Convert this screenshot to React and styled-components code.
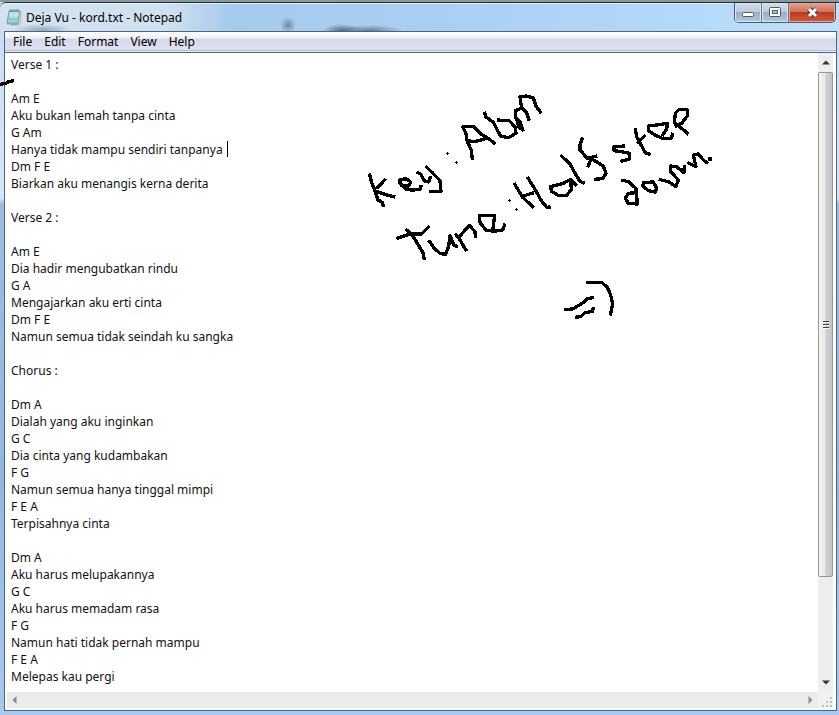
import React, { useState } from 'react'
import styled, { createGlobalStyle } from 'styled-components'

const menus = ['File', 'Edit', 'Format', 'View', 'Help']

const lyrics = `Verse 1 :

Am E
Aku bukan lemah tanpa cinta
G Am
Hanya tidak mampu sendiri tanpanya
Dm F E
Biarkan aku menangis kerna derita

Verse 2 :

Am E
Dia hadir mengubatkan rindu
G A
Mengajarkan aku erti cinta
Dm F E
Namun semua tidak seindah ku sangka

Chorus :

Dm A
Dialah yang aku inginkan
G C
Dia cinta yang kudambakan
F G
Namun semua hanya tinggal mimpi
F E A
Terpisahnya cinta

Dm A
Aku harus melupakannya
G C
Aku harus memadam rasa
F G
Namun hati tidak pernah mampu
F E A
Melepas kau pergi`

// pen strokes, three units to a pixel
const keyStrokes = [
  'M28 250L34 275L44 300L54 330L68 338L70 352',
  'M77 266L50 296M44 302L80 315L106 321',
  'M120 286L146 288L152 276L140 267L120 268L120 280L140 299L160 300L182 297L183 284',
  'M170 246L182 252L192 272L206 276L212 258',
  'M196 228L215 246L240 272L243 304L208 304',
  'M337 209L334 180L322 155L318 130L308 110L340 110L362 132L385 145L406 162',
  'M318 152L345 155L380 145',
  'M373 65L377 80L400 97L412 120L422 138L445 143L468 130L466 112L448 92L410 90',
  'M490 124L480 95L468 86L466 62L485 54L500 68L508 92M470 84L476 112L490 120',
  'M485 56L480 20L500 18L520 24L528 48L544 70',
  'M109 446L150 432L185 432L209 408',
  'M136 417L155 432L172 460L190 490L193 510',
  'M206 451L222 474L240 490L256 494L266 470L270 436L282 466L294 470',
  'M285 430L300 450L320 484M298 440L328 406L345 425L347 445',
  'M398 422L404 376L358 376L360 398L378 420L400 424L428 420L435 401',
]

const tuneStrokes = [
  'M42 279L68 322L102 354M82 261L104 296L124 332L140 352L148 352L146 346',
  'M70 318L102 308',
  'M212 268L190 280L152 290L154 304L175 316L200 316L214 298L212 268L230 287',
  'M182 196L210 222L228 255L240 274L254 280',
  'M248 142L240 165L240 180L262 205L292 198',
  'M263 232L274 206L310 228L318 250L308 266L283 268',
  'M375 168L342 170L342 182L370 186L388 190L388 208L361 214',
  'M405 115L410 140L425 168L436 188L452 194M412 160L437 135',
  'M445 108L470 105L502 100L500 118L486 138M445 106L446 122L466 136L490 146L514 145L519 128',
  'M566 133L545 115L523 98L526 70L538 58L563 60L562 78L545 100L524 110',
  'M364 270L385 275L408 295L412 342L385 340L376 325L385 310L408 308',
  'M428 292L430 278L460 276L470 294L466 306L445 302L428 288',
  'M476 268L505 275L528 290L535 270L512 245L512 228L530 230L552 248L553 226',
  'M562 217L588 230L580 195L595 192L610 210L624 220',
  'M625 207L636 207',
]

const smileStrokes = [
  'M108 37L155 37L172 52L182 75L188 100L181 137',
  'M42 119L68 117L100 98L112 86L132 82',
  'M76 142L92 140L105 128L128 124L130 110',
]

const Strokes = ({ x, y, paths }) => (
  <g transform={`translate(${x} ${y}) scale(0.3333)`}>
    {paths.map((d) => (
      <path key={d} d={d} />
    ))}
  </g>
)

const NotepadIcon = () => (
  <svg width='16' height='17' viewBox='0 0 16 17' aria-hidden='true'>
    <path d='M13 2l2 1-1 13H5l7-1z' fill='#efe9d3' stroke='#9a9c8c' strokeWidth='.6' />
    <path d='M3 2h11l-2 13H1z' fill='#86c3c6' stroke='#6f979d' strokeWidth='.8' />
    <path d='M4 3h9l-1 5H3z' fill='#b5e3e2' />
    <path d='M3 6h10M3 9h9M2 12h10' stroke='#c9eeec' strokeWidth='.8' />
    <path d='M4 0v3M6 0v3M8 0v3M10 0v3M12 0v3' stroke='#5c757b' strokeWidth='.8' />
  </svg>
)

const App = () => {
  const [text, setText] = useState(lyrics)

  return (
    <>
      <GlobalStyle />
      <Window>
        <TitleBar>
          <NotepadIcon />
          <Title>Deja Vu - kord.txt - Notepad</Title>
          <Controls>
            <ControlButton aria-label='Minimize'>
              <svg width='13' height='12' viewBox='0 0 13 12'>
                <rect x='.5' y='5.5' width='11' height='4' rx='1' fill='#fff' stroke='#4c5a6b' />
              </svg>
            </ControlButton>
            <ControlButton aria-label='Maximize'>
              <svg width='13' height='12' viewBox='0 0 13 12'>
                <rect x='.5' y='.5' width='11' height='9' rx='1' fill='#fff' stroke='#4c5a6b' />
                <rect x='3.500' y='3.500' width='5' height='3' fill='#b9c4d2' stroke='#4c5a6b' />
              </svg>
            </ControlButton>
            <ControlButton $close aria-label='Close'>
              <svg width='13' height='12' viewBox='0 0 13 12'>
                <path d='M3 2l7 7M10 2l-7 7' stroke='#5b3a40' strokeWidth='5' />
                <path d='M3 2l7 7M10 2l-7 7' stroke='#fff' strokeWidth='3' />
              </svg>
            </ControlButton>
          </Controls>
        </TitleBar>

        <Client>
          <MenuBar>
            {menus.map((menu) => (
              <MenuButton key={menu}>{menu}</MenuButton>
            ))}
          </MenuBar>
          <Editor>
            <TextArea
              aria-label='Document text'
              spellCheck={false}
              rows={37}
              wrap='off'
              value={text}
              onChange={(e) => setText(e.target.value)}
            />
            <VerticalBar>
              <ArrowButton aria-label='Scroll up'>
                <svg width='8' height='5' viewBox='0 0 8 5'>
                  <path d='M0 4.500L4 0.500L8 4.500z' fill='#333' />
                </svg>
              </ArrowButton>
              <Thumb>
                <svg width='8' height='10' viewBox='0 0 8 10'>
                  <path d='M1 1.500h6M1 4.500h6M1 7.500h6' stroke='#444' />
                  <path d='M1 2.500h6M1 5.500h6M1 8.500h6' stroke='#fff' />
                </svg>
              </Thumb>
              <ArrowButton aria-label='Scroll down'>
                <svg width='8' height='5' viewBox='0 0 8 5'>
                  <path d='M0 0.500L4 4.500L8 0.500z' fill='#333' />
                </svg>
              </ArrowButton>
            </VerticalBar>
          </Editor>
          <HorizontalBar>
            <ArrowButton aria-label='Scroll left'>
              <svg width='5' height='8' viewBox='0 0 5 8'>
                <path d='M4.500 0L0.500 4L4.500 8z' fill='#8a8a8a' />
              </svg>
            </ArrowButton>
            <Track />
            <ArrowButton aria-label='Scroll right'>
              <svg width='5' height='8' viewBox='0 0 5 8'>
                <path d='M0.500 0L4.500 4L0.500 8z' fill='#8a8a8a' />
              </svg>
            </ArrowButton>
            <Grip>
              <svg width='11' height='11' viewBox='0 0 11 11'>
                <path
                  d='M8 0h2v2h-2zM8 4h2v2h-2zM8 8h2v2h-2zM4 4h2v2h-2zM4 8h2v2h-2zM0 8h2v2h-2z'
                  fill='#bcbcbc'
                />
              </svg>
            </Grip>
          </HorizontalBar>
        </Client>

        <Ink width='839' height='715' viewBox='0 0 839 715' aria-label='Key : Abm, Tune : Half step down'>
          <Strokes x={360} y={90} paths={keyStrokes} />
          <Strokes x={500} y={90} paths={tuneStrokes} />
          <Strokes x={550} y={270} paths={smileStrokes} />
          <Strokes x={0} y={0} paths={['M0 253L18 250L25 245L42 242']} />
          <path
            className='dot'
            d='M446 153.500h3M447.500 152v3M455 162.500h3M456.500 161v3M508 200.500h3M509.500 199v3M515 209.500h3M516.500 208v3'
          />
          <path className='dot' d='M227.500 141v16' />
        </Ink>
      </Window>
    </>
  )
}

const GlobalStyle = createGlobalStyle`
  *{
    box-sizing:border-box;
  }
  body{
    margin:0;
    font-family:"Noto Sans", "Open Sans", sans-serif;
    font-size:12px;
    color:#000;
  }
  button{
    font:inherit;
    color:inherit;
    border:none;
    background:none;
    padding:0;
    display:flex;
    align-items:center;
    justify-content:center;
  }
`

const Window = styled.main`
  position:relative;
  min-height:100vh;
  display:flex;
  flex-direction:column;
  overflow:hidden;
  padding:0 2px 4px 4px;
  border-top:2px solid #8a9897;
  background:linear-gradient(#c8def3 0, #d6e6f6 196px, #9bbde2 202px, #93b8e0 480px, #a9c9ee 100%);
`

const TitleBar = styled.header`
  display:flex;
  align-items:center;
  height:29px;
  margin:0 -2px 0 -4px;
  padding:0 3px 0 6px;
  border-top:1px solid #1d2c3a;
  border-top-left-radius:6px;
  box-shadow:inset 0 1px #e6f4ff;
  background:
    radial-gradient(circle 8px at 288px 22px, #6c8cae 0, transparent 100%),
    radial-gradient(ellipse 20px 7px at 342px 28px, #4e6a88 0, transparent 100%),
    radial-gradient(ellipse 34px 6px at 370px 28px, #5d7b9b 0, transparent 100%),
    radial-gradient(ellipse 30px 6px at 42px 27px, #93a9bf 0, transparent 100%),
    linear-gradient(90deg, #d3e2ee 0, #cfe0f0 170px, #a5caec 230px, #add0f5 60%, #b6daf9 85%, #c3e0f8 100%);
`

const Title = styled.h1`
  flex:1;
  margin:0 0 0 4px;
  font-size:12px;
  font-weight:400;
  line-height:17px;
`

const Controls = styled.div`
  display:flex;
  align-self:flex-start;
  height:20px;
  border:1px solid #465a70;
  border-top:none;
  border-radius:0 0 5px 5px;
  overflow:hidden;
`

const ControlButton = styled.button`
  width:${(props) => (props.$close ? '46px' : '27px')};
  box-shadow:inset 0 0 0 1px ${(props) => (props.$close ? '#e9a595' : '#dbe6f0')};
  background:${(props) =>
    props.$close
      ? 'linear-gradient(#e5a390 0, #d0705a 45%, #bd3a22 50%, #cf5a3c 100%)'
      : 'linear-gradient(#d3deea 0, #bccbdb 45%, #9aaec4 50%, #b6c8da 100%)'};
  &&{
    border-right:${(props) => (props.$close ? 'none' : '1px solid #5f7389')};
  }
`

const Client = styled.div`
  flex:1;
  display:flex;
  flex-direction:column;
  border:1px solid #4a6583;
  border-bottom-color:#44678a;
  background:#fff;
`

const MenuBar = styled.nav`
  display:flex;
  height:21px;
  padding-left:2px;
  border-bottom:1px solid #4a6583;
  box-shadow:inset 0 -1px #e9edf5, inset 0 -2px #b3bdce;
  background:linear-gradient(#fff 0, #eef1f8 6px, #d5daea 7px, #e0e2f3 100%);
`

const MenuButton = styled.button`
  padding:0 6px 1px;
`

const Editor = styled.div`
  flex:1;
  display:flex;
  padding-right:3px;
`

const TextArea = styled.textarea`
  flex:1;
  min-width:0;
  padding:3px 6px 5px;
  border:none;
  outline:none;
  resize:none;
  overflow:hidden;
  background:#fff;
  color:#111;
  font-family:inherit;
  font-size:12px;
  line-height:17px;
`

const VerticalBar = styled.div`
  display:flex;
  flex-direction:column;
  width:15px;
  background:#eeeeee;
`

const ArrowButton = styled.button`
  flex:none;
  width:15px;
  height:19px;
`

const Thumb = styled.div`
  display:flex;
  flex:1;
  align-items:center;
  justify-content:center;
  margin-bottom:96px;
  border:1px solid #979797;
  border-radius:2px;
  background:linear-gradient(90deg, #f6f6f6 0, #e8e8ea 45%, #cfcfd4 55%, #c3c3ca 100%);
`

const HorizontalBar = styled.div`
  display:flex;
  align-items:center;
  height:16px;
  margin:0 3px 2px 2px;
  background:#ebebeb;
`

const Track = styled.div`
  flex:1;
`

const Grip = styled.div`
  display:flex;
  align-items:flex-end;
  justify-content:flex-end;
  align-self:stretch;
  width:15px;
  background:#f1f1f1;
`

const Ink = styled.svg`
  position:absolute;
  left:0;
  top:-2px;
  pointer-events:none;
  shape-rendering:crispEdges;
  fill:none;
  stroke:#000;
  stroke-width:10px;
  stroke-linejoin:round;
  .dot{
    stroke-width:1px;
  }
`

export default App
